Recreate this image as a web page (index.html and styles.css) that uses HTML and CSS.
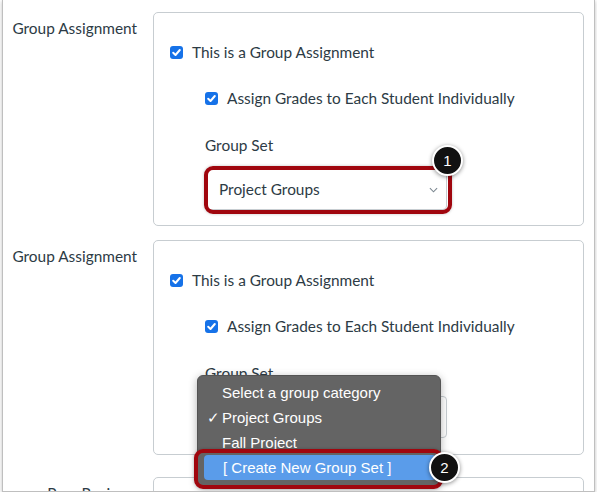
FILE: index.html
```html
<!DOCTYPE html>
<html>
<head>
<meta charset="utf-8">
<link rel="stylesheet" href="styles.css">
</head>
<body>
<div class="window">
  <div class="form">
    <div class="row row-first">
      <div class="label">Group Assignment</div>
      <div class="card">
        <label class="check"><span class="box"><svg viewBox="0 0 13 13" width="13" height="13"><path d="M3.2 6.8 L5.5 9 L9.8 4" fill="none" stroke="#fff" stroke-width="2" stroke-linecap="round" stroke-linejoin="round"/></svg></span>This is a Group Assignment</label>
        <div class="indent">
          <label class="check check-2"><span class="box"><svg viewBox="0 0 13 13" width="13" height="13"><path d="M3.2 6.8 L5.5 9 L9.8 4" fill="none" stroke="#fff" stroke-width="2" stroke-linecap="round" stroke-linejoin="round"/></svg></span>Assign Grades to Each Student Individually</label>
          <div class="field-label">Group Set</div>
          <div class="select">
            <span>Project Groups</span>
            <svg class="chev" viewBox="0 0 10 6" width="9" height="6"><path d="M1 1 L5 5 L9 1" fill="none" stroke="#7b8790" stroke-width="1.2"/></svg>
            <div class="callout callout-select"></div>
            <div class="badge badge-1">1</div>
          </div>
        </div>
      </div>
    </div>
    <div class="row row-second">
      <div class="label">Group Assignment</div>
      <div class="card card-2">
        <label class="check"><span class="box"><svg viewBox="0 0 13 13" width="13" height="13"><path d="M3.2 6.8 L5.5 9 L9.8 4" fill="none" stroke="#fff" stroke-width="2" stroke-linecap="round" stroke-linejoin="round"/></svg></span>This is a Group Assignment</label>
        <div class="indent">
          <label class="check check-2"><span class="box"><svg viewBox="0 0 13 13" width="13" height="13"><path d="M3.2 6.8 L5.5 9 L9.8 4" fill="none" stroke="#fff" stroke-width="2" stroke-linecap="round" stroke-linejoin="round"/></svg></span>Assign Grades to Each Student Individually</label>
          <div class="field-label">Group Set</div>
          <div class="select">
            <span>Project Groups</span>
            <svg class="chev" viewBox="0 0 10 6" width="9" height="6"><path d="M1 1 L5 5 L9 1" fill="none" stroke="#7b8790" stroke-width="1.2"/></svg>
            <div class="menu">
              <div class="item">Select a group category</div>
              <div class="item"><span class="tick">✓</span>Project Groups</div>
              <div class="item">Fall Project</div>
              <div class="item item-active">[ Create New Group Set ]</div>
              <div class="callout callout-item"></div>
              <div class="badge badge-2">2</div>
            </div>
          </div>
        </div>
      </div>
    </div>
    <div class="row">
      <div class="label">Peer Reviews</div>
      <div class="card card-3"></div>
    </div>
  </div>
</div>
</body>
</html>
```
FILE: styles.css
```css
* { box-sizing: border-box; }
html, body { margin: 0; padding: 0; background: #fff; }
body {
  font-family: Lato, "Open Sans", sans-serif;
  color: #2d3b45;
  font-size: 15.4px;
  line-height: 24px;
}
.window {
  position: relative;
  margin-left: 2px;
  width: 593px;
  height: 492px;
  border: 1px solid #bfbfbf;
  border-top: none;
  overflow: hidden;
  box-shadow: 0 1px 4px rgba(0, 0, 0, 0.25);
  background: #fff;
}
.form { padding-top: 12px; }
.row {
  display: grid;
  grid-template-columns: 134px 431px;
  column-gap: 16px;
}
.row-first { margin-bottom: 14px; }
.row-second { margin-bottom: 22px; }
.label {
  text-align: right;
  padding-top: 4px;
}
.card {
  border: 1px solid #c7cdd1;
  border-radius: 5px;
  padding: 27px 16px 15px 16px;
}
.card-2 { padding-bottom: 16px; }
.card-3 { height: 80px; }
.check {
  display: flex;
  align-items: center;
  height: 24px;
  gap: 9px;
}
.box {
  width: 13px;
  height: 13px;
  border-radius: 3px;
  background: #1672e8;
  display: block;
  flex: none;
}
.box svg { display: block; }
.indent { padding-left: 35px; }
.check-2 { margin-top: 22px; }
.field-label { margin-top: 23px; }
.select {
  position: relative;
  margin-top: 11px;
  width: 242px;
  height: 42px;
  border: 1px solid #c7cdd1;
  border-radius: 4px;
  display: flex;
  align-items: center;
  justify-content: space-between;
  padding: 0 8px 0 13px;
}
.chev { display: block; margin-top: 1px; }
.callout {
  position: absolute;
  border: 4px solid #a0060e;
  border-radius: 9px;
  box-shadow: 0 0 3px rgba(0, 0, 0, 0.25);
  pointer-events: none;
}
.callout-select {
  left: -2px;
  top: -3px;
  width: 248px;
  height: 48px;
}
.badge {
  position: absolute;
  width: 31px;
  height: 31px;
  border-radius: 50%;
  background: #111;
  border: 2px solid #fff;
  box-shadow: 0 1px 4px rgba(0, 0, 0, 0.45);
  color: #fff;
  font-family: "Liberation Sans", Arial, sans-serif;
  font-size: 15px;
  line-height: 27px;
  text-align: center;
}
.badge-1 { left: 226px; top: -24px; }
.menu {
  position: absolute;
  left: -9px;
  top: -22px;
  width: 244px;
  height: 112px;
  background: #646464;
  border: 1px solid #545454;
  border-radius: 6px;
  box-shadow: 0 2px 8px rgba(0, 0, 0, 0.3);
  padding: 4px 4px 6px 6px;
  font-family: "Liberation Sans", Arial, sans-serif;
  font-size: 15px;
  color: #fff;
}
.item {
  position: relative;
  height: 25px;
  line-height: 25px;
  padding-left: 18px;
  border-radius: 4px;
}
.tick {
  position: absolute;
  left: 3px;
  top: 0;
  width: 12px;
  overflow: hidden;
}
.item-active { background: #5a9cea; padding-left: 19px; }
.callout-item {
  left: -4px;
  top: 73px;
  width: 249px;
  height: 40px;
}
.badge-2 { left: 231px; top: 76px; }
```
